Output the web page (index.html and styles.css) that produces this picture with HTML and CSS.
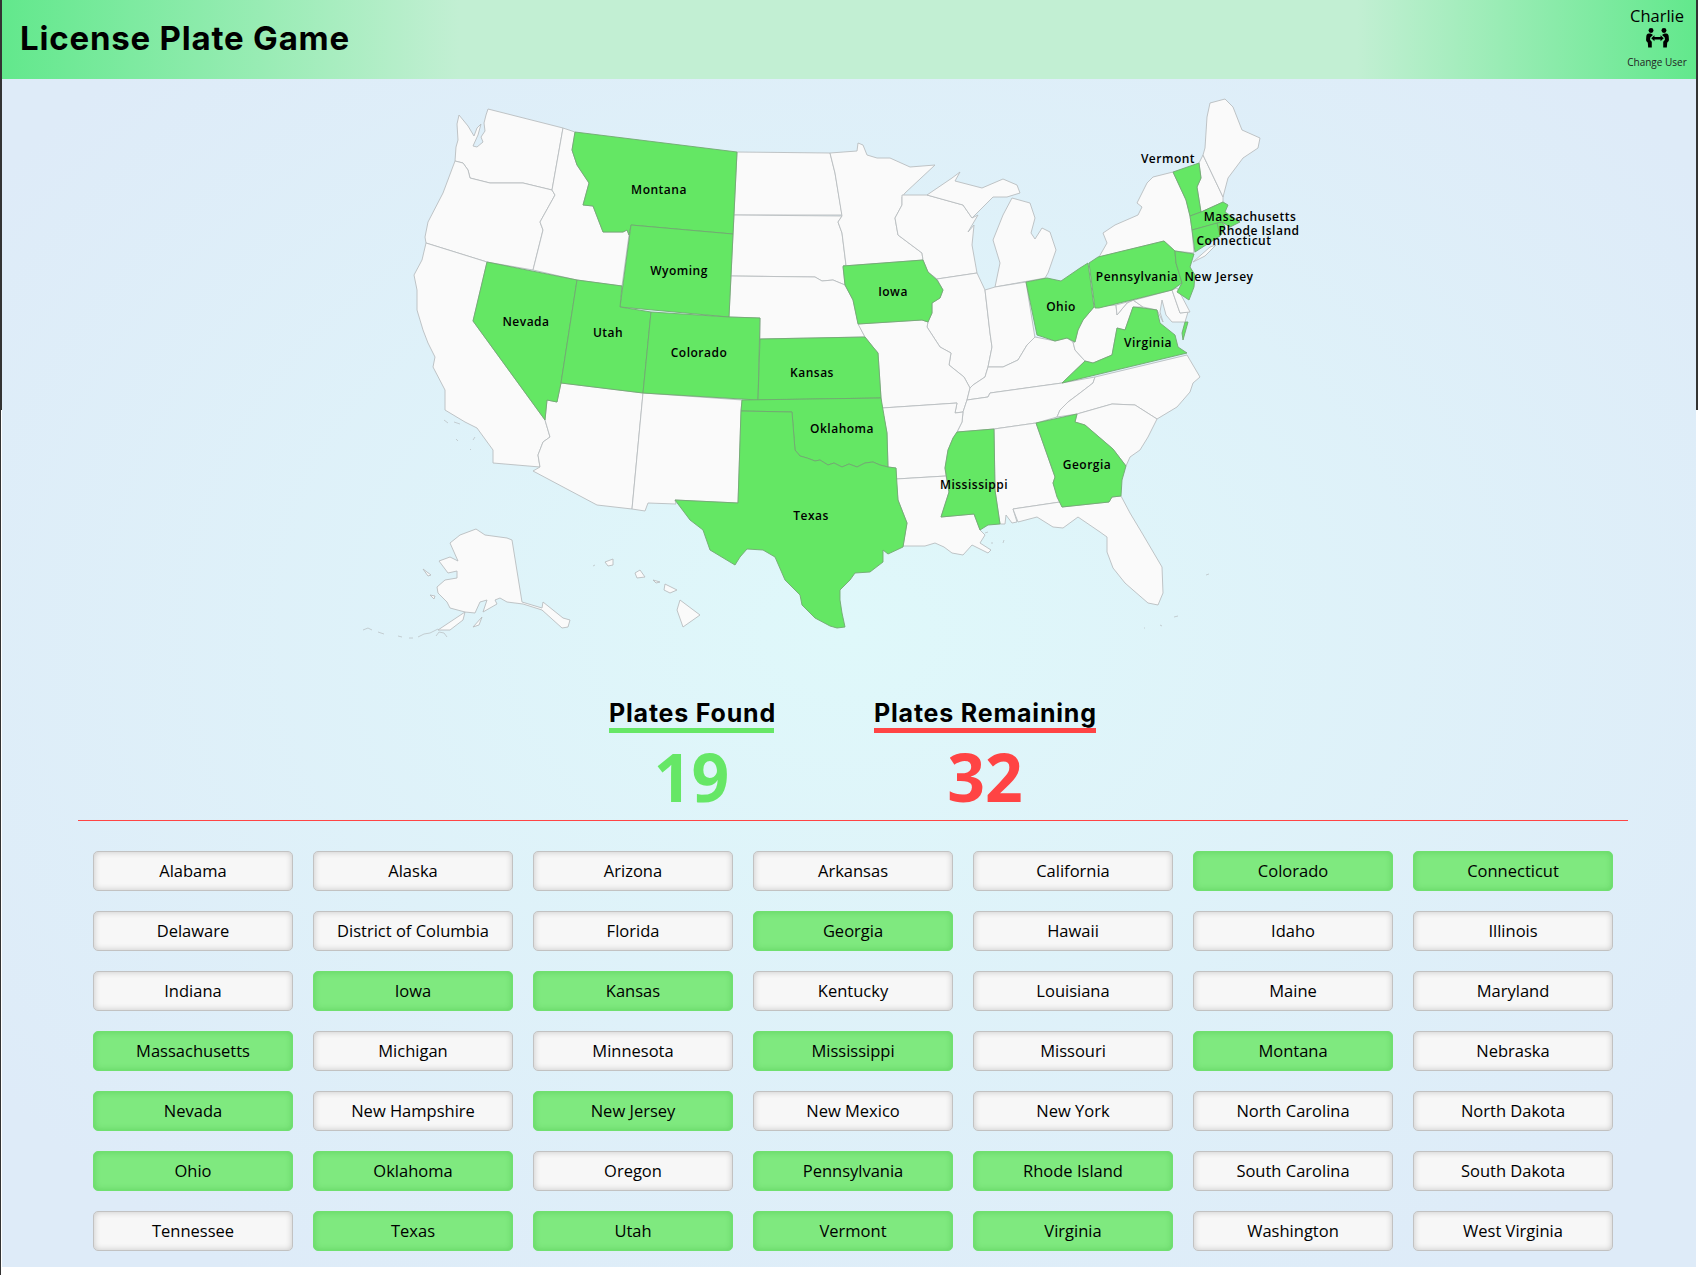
FILE: index.html
```html
<!DOCTYPE html>
<html lang="en">
  <head>
    <meta charset="UTF-8" />
    <meta name="viewport" content="width=device-width, initial-scale=1.0" />
    <title>License Plate Game</title>
    <link rel="stylesheet" href="styles.css">
  </head>
  <body>
    <div class="page">
      <header>
        <h1>License Plate Game</h1>
        <div class="user">
          <span class="user-name">Charlie</span>
          <svg class="user-icon" viewBox="0 0 24 21" aria-hidden="true">
            <circle cx="5.2" cy="2.6" r="2.6" />
            <circle cx="18.8" cy="2.6" r="2.6" />
            <path d="M2.8 5.8 C1 6 0.3 7.4 0.2 9.2 L0 12.4 C0 13.8 1 14.6 1.8 15.4 L2.2 20.6 L6 20.6 L6 14.4 L4.2 12.4 L4.4 10 L7.2 7.4 C6.4 6.4 4.8 5.6 2.8 5.8 Z" />
            <path d="M21.2 5.8 C23 6 23.7 7.4 23.8 9.2 L24 12.4 C24 13.8 23 14.6 22.2 15.4 L21.8 20.6 L18 20.6 L18 14.4 L19.8 12.4 L19.6 10 L16.8 7.4 C17.6 6.4 19.2 5.6 21.2 5.8 Z" />
            <path d="M5.4 10.8 L8.8 7.6 L8.8 9.5 L15.2 9.5 L15.2 7.6 L18.6 10.8 L15.2 14 L15.2 12.1 L8.8 12.1 L8.8 14 Z" />
          </svg>
          <span class="user-change">Change User</span>
        </div>
      </header>

      <svg class="map" viewBox="349 90 1000 570" role="img" aria-label="Map of the United States">
        <g class="islands">
          <path d="M363 630 l5 -2 l4 2 M378 632 l6 2 M398 636 l4 1 M409 638 l4 0 M418 637 l6 -3 l6 -1 l8 -4 M436 636 l3 -4 l5 1 l3 4" />
          <path d="M444 420 l4 3 M454 422 l6 2 M456 439 l2 2 M473 440 l2 -3 M470 449 l1 1" />
          <path d="M1206 575 l3 -1 M1144 628 l1 0 M1160 625 l2 1 M1174 617 l4 -1" />
          <path d="M593 566 l2 -1 M985 533 l3 -1 M992 542 l0 2 M1004 540 l-1 3" />
          <path d="M545 610 l3 5 M550 615 l5 6 M557 620 l5 6" />
        </g>
        <g class="states">
          <path d="M459 115 L457 124 458 140 456 147 455 161 463 163 468 170 470 178 490 183 523 183 552 190 563 128 488 109 486 115 484 123 485 131 481 137 483 142 477 147 473 146 478 135 481 124 477 128 474 136 468 126 Z" />
          <path d="M455 161 L443 193 428 222 425 237 426 243 487 262 533 270 543 230 540 222 555 195 552 190 523 183 490 183 470 178 468 170 463 163 Z" />
          <path d="M426 243 L422 260 414 275 417 290 417 310 423 330 428 343 435 357 433 367 445 390 445 410 465 422 477 428 493 450 493 463 540 467 538 455 543 442 550 437 545 420 473 321 487 262 Z" />
          <path d="M563 128 L575 132 572 150 577 165 589 183 583 205 593 206 603 232 623 232 627 230 629 235 622 286 577 280 533 270 543 230 540 222 555 195 552 190 Z" />
          <path d="M561 383 L643 393 632 509 597 505 533 471 540 467 538 455 543 442 550 437 545 420 547 400 557 402 Z" />
          <path d="M643 393 L742 400 741 411 738 503 675 500 676 504 648 503 645 511 632 509 Z" />
          <path d="M737 152 L830 153 835 173 842 215 734 215 Z" />
          <path d="M734 215 L842 216 838 222 842 233 846 265 843 267 845 285 833 280 822 281 815 277 731 276 Z" />
          <path d="M731 276 L815 277 822 281 833 280 845 285 853 300 858 323 865 337 760 339 760 318 729 317 Z" />
          <path d="M830 153 L857 151 858 143 863 145 867 155 877 158 890 158 910 167 935 165 905 193 902 197 902 205 895 218 898 235 922 253 923 260 843 266 846 265 842 233 838 222 842 216 835 173 Z" />
          <path d="M902 195 L927 195 963 205 972 218 978 215 968 232 974 225 972 245 977 273 937 279 928 272 923 260 922 253 898 235 895 218 902 205 Z" />
          <path d="M927 195 L952 178 960 172 955 181 982 188 1003 179 1017 185 1020 193 1007 197 993 197 977 213 972 218 963 205 Z" />
          <path d="M1012 198 L1030 203 1035 218 1031 233 1035 239 1042 228 1050 232 1056 250 1048 273 1045 278 995 287 1000 263 993 240 1003 215 Z" />
          <path d="M937 279 L977 273 985 290 990 333 992 347 988 367 985 377 973 385 970 388 964 377 949 365 951 353 940 347 927 327 928 322 932 313 932 303 940 298 943 290 Z" />
          <path d="M985 290 L995 287 1026 282 1035 338 1027 345 1018 360 1003 367 988 367 992 347 990 333 Z" />
          <path d="M858 324 L922 320 928 322 927 327 940 347 951 353 949 365 964 377 970 388 967 400 963 412 955 413 957 403 882 408 881 398 878 353 873 347 865 337 Z" />
          <path d="M1035 337 L1055 341 1067 338 1073 342 1075 350 1085 361 1062 383 990 393 988 397 967 400 970 388 973 385 985 377 988 367 1003 367 1018 360 1027 345 Z" />
          <path d="M1062 383 L1095 377 1093 383 1080 393 1068 402 1060 410 1057 417 1036 423 994 429 957 432 962 422 963 412 967 400 988 397 990 393 Z" />
          <path d="M1095 377 L1187 355 1200 377 1193 383 1190 392 1177 407 1157 419 1135 405 1112 404 1077 414 1057 417 1060 410 1068 402 1080 393 1093 383 Z" />
          <path d="M882 408 L957 403 955 413 963 412 962 422 957 432 953 438 948 450 945 468 946 476 896 479 896 468 888 467 887 433 Z" />
          <path d="M896 479 L946 476 949 492 941 517 974 514 980 530 985 535 980 543 991 550 988 553 972 545 963 555 952 553 944 547 935 543 925 546 903 546 907 523 898 500 Z" />
          <path d="M994 429 L1036 423 1055 477 1053 483 1060 502 1013 509 1017 522 1012 523 1006 515 1005 524 1000 524 995 490 Z" />
          <path d="M1013 509 L1060 502 1062 507 1109 502 1112 497 1121 496 1130 513 1142 533 1162 567 1163 593 1158 605 1148 603 1133 590 1125 583 1113 568 1107 552 1107 537 1100 532 1078 517 1063 528 1053 527 1037 517 1018 522 Z" />
          <path d="M1077 414 L1112 404 1135 405 1157 419 1148 437 1140 450 1130 457 1126 466 1113 449 1085 425 1075 422 Z" />
          <path d="M1094 307 L1116 305 1117 315 1127 303 1133 300 1143 307 1133 307 1125 330 1117 328 1112 355 1093 363 1085 361 1075 350 1073 342 1075 342 1078 330 1083 320 Z" />
          <path d="M1116 305 L1172 290 1180 313 1188 312 1185 322 1172 322 1166 315 1162 300 1160 312 1163 322 1157 310 1143 307 1133 300 1127 303 1117 315 Z" />
          <path d="M1172 290 L1177 288 1180 293 1190 312 1180 313 Z" />
          <path d="M1099 257 L1107 243 1103 233 1115 225 1138 215 1142 207 1137 203 1147 183 1153 177 1173 172 1186 200 1190 216 1192 230 1194 253 1175 251 1164 241 Z" />
          <path d="M1193 262 L1210 247 1216 245 1205 256 Z" />
          <path d="M1203 155 L1223 197 1223 202 1201 212 1197 187 1201 178 1199 163 Z" />
          <path d="M1203 155 L1205 148 1207 117 1210 103 1225 99 1233 107 1242 130 1260 138 1258 148 1243 158 1228 178 1223 197 Z" />
          <path d="M476 529 L485 535 507 538 512 540 522 602 542 608 543 602 563 618 570 620 568 627 562 628 542 610 523 604 507 602 500 598 495 600 497 604 483 612 487 600 480 602 475 613 465 612 463 620 450 630 438 630 465 612 450 608 447 602 438 593 437 587 445 580 457 578 457 571 448 573 439 561 450 557 458 561 450 543 460 535 Z" />
          <path d="M473 627 L482 617 479 625 Z" />
          <path d="M423 569 L431 575 428 576 Z" />
          <path d="M430 595 L435 596 434 599 Z" />
          <path d="M680 600 L700 615 683 627 677 610 Z" />
          <path d="M665 584 L677 590 670 593 664 590 Z" />
          <path d="M635 573 L640 570 645 577 637 578 Z" />
          <path d="M605 562 L613 559 613 565 608 566 Z" />
          <path d="M653 580 L660 582 656 583 Z" />
        </g>
        <g class="states found">
          <path d="M575 132 L737 152 733 234 631 225 629 235 627 230 623 232 603 232 593 206 583 205 589 183 577 165 572 150 Z" />
          <path d="M631 225 L733 234 729 317 620 307 Z" />
          <path d="M487 262 L577 280 561 383 557 402 547 400 545 420 473 321 Z" />
          <path d="M577 280 L622 286 620 307 651 312 643 393 561 383 Z" />
          <path d="M651 312 L729 317 760 318 758 400 643 393 Z" />
          <path d="M760 339 L865 337 873 347 878 353 881 398 758 400 Z" />
          <path d="M742 400 L881 398 887 433 888 467 880 465 873 462 865 463 857 467 849 464 842 467 834 463 828 465 820 460 815 461 807 458 800 456 795 450 792 412 741 411 Z" />
          <path d="M741 411 L792 412 795 450 800 456 807 458 815 461 820 460 828 465 834 463 842 467 849 464 857 467 865 463 873 462 880 465 888 467 896 468 898 500 907 523 903 547 888 554 883 550 883 562 870 572 855 573 850 580 840 590 840 600 842 613 845 627 837 628 830 626 815 618 802 605 800 595 785 580 775 557 763 550 747 549 740 557 735 565 710 550 703 530 690 520 675 500 738 503 Z" />
          <path d="M843 266 L923 260 928 272 937 280 943 290 940 298 932 303 932 313 928 322 922 320 858 324 853 300 845 285 Z" />
          <path d="M1026 282 L1047 278 1061 281 1080 268 1088 263 1094 307 1083 320 1078 330 1075 342 1067 338 1055 341 1037 335 Z" />
          <path d="M957 432 L994 429 995 490 1000 524 988 525 980 530 974 514 941 517 949 492 945 468 948 450 953 438 Z" />
          <path d="M1036 423 L1077 414 1075 422 1085 425 1113 449 1126 466 1122 480 1121 496 1112 497 1109 502 1062 507 1057 497 1053 483 1055 477 Z" />
          <path d="M1089 263 L1098 257 1164 241 1175 251 1176 263 1182 283 1172 290 1099 308 1095 308 Z" />
          <path d="M1175 251 L1194 254 1190 267 1195 275 1194 287 1189 300 1177 292 1182 283 1176 263 Z" />
          <path d="M1062 383 L1085 361 1093 363 1112 355 1117 328 1125 330 1133 307 1143 308 1157 310 1160 323 1175 335 1178 347 1187 353 Z" />
          <path d="M1185 322 L1188 322 1183 340 1182 333 Z" />
          <path d="M1173 172 L1199 163 1201 178 1197 187 1201 212 1190 216 1186 200 Z" />
          <path d="M1190 216 L1201 212 1223 202 1228 205 1225 212 1240 222 1230 227 1222 222 1192 230 Z" />
          <path d="M1217 223 L1222 222 1225 226 1221 235 1219 236 Z" />
          <path d="M1192 230 L1217 223 1220 236 1195 252 Z" />
        </g>
        <g class="labels">
          <text x="659" y="194">Montana</text>
          <text x="679" y="275">Wyoming</text>
          <text x="526" y="326">Nevada</text>
          <text x="608" y="337">Utah</text>
          <text x="699" y="357">Colorado</text>
          <text x="812" y="377">Kansas</text>
          <text x="842" y="433">Oklahoma</text>
          <text x="811" y="520">Texas</text>
          <text x="974" y="489">Mississippi</text>
          <text x="1087" y="469">Georgia</text>
          <text x="893" y="296">Iowa</text>
          <text x="1061" y="311">Ohio</text>
          <text x="1137" y="281">Pennsylvania</text>
          <text x="1219" y="281">New Jersey</text>
          <text x="1148" y="347">Virginia</text>
          <text x="1168" y="163">Vermont</text>
          <text x="1250" y="221">Massachusetts</text>
          <text x="1259" y="235">Rhode Island</text>
          <text x="1234" y="245">Connecticut</text>
        </g>
      </svg>

      <section class="stats">
        <div class="stat stat-found">
          <h2>Plates Found</h2>
          <p>19</p>
        </div>
        <div class="stat stat-remaining">
          <h2>Plates Remaining</h2>
          <p>32</p>
        </div>
      </section>

      <main class="plates">
        <div class="plate">Alabama</div>
        <div class="plate">Alaska</div>
        <div class="plate">Arizona</div>
        <div class="plate">Arkansas</div>
        <div class="plate">California</div>
        <div class="plate found">Colorado</div>
        <div class="plate found">Connecticut</div>
        <div class="plate">Delaware</div>
        <div class="plate">District of Columbia</div>
        <div class="plate">Florida</div>
        <div class="plate found">Georgia</div>
        <div class="plate">Hawaii</div>
        <div class="plate">Idaho</div>
        <div class="plate">Illinois</div>
        <div class="plate">Indiana</div>
        <div class="plate found">Iowa</div>
        <div class="plate found">Kansas</div>
        <div class="plate">Kentucky</div>
        <div class="plate">Louisiana</div>
        <div class="plate">Maine</div>
        <div class="plate">Maryland</div>
        <div class="plate found">Massachusetts</div>
        <div class="plate">Michigan</div>
        <div class="plate">Minnesota</div>
        <div class="plate found">Mississippi</div>
        <div class="plate">Missouri</div>
        <div class="plate found">Montana</div>
        <div class="plate">Nebraska</div>
        <div class="plate found">Nevada</div>
        <div class="plate">New Hampshire</div>
        <div class="plate found">New Jersey</div>
        <div class="plate">New Mexico</div>
        <div class="plate">New York</div>
        <div class="plate">North Carolina</div>
        <div class="plate">North Dakota</div>
        <div class="plate found">Ohio</div>
        <div class="plate found">Oklahoma</div>
        <div class="plate">Oregon</div>
        <div class="plate found">Pennsylvania</div>
        <div class="plate found">Rhode Island</div>
        <div class="plate">South Carolina</div>
        <div class="plate">South Dakota</div>
        <div class="plate">Tennessee</div>
        <div class="plate found">Texas</div>
        <div class="plate found">Utah</div>
        <div class="plate found">Vermont</div>
        <div class="plate found">Virginia</div>
        <div class="plate">Washington</div>
        <div class="plate">West Virginia</div>
      </main>
    </div>
  </body>
</html>
```

FILE: styles.css
```css
* {
  box-sizing: border-box;
  margin: 0;
  padding: 0;
}

html,
body {
  font-family: "Open Sans", sans-serif;
  color: #000000;
}

body {
  background:
    linear-gradient(#333333, #333333) left top / 2px 410px no-repeat,
    linear-gradient(#333333, #333333) right top / 2px 410px no-repeat,
    linear-gradient(#333333, #333333) left top / 1px 100% no-repeat,
    #ffffff;
  height: 1275px;
  overflow: hidden;
}

.page {
  margin: 0 2px;
  height: 1267px;
  background: radial-gradient(ellipse 62% 62% at 50% 50%, #dff8fa 0%, #deebf8 100%);
}

header {
  display: flex;
  align-items: center;
  justify-content: space-between;
  height: 79px;
  padding: 0 9px 0 18px;
  background: linear-gradient(90deg, #62e88c 0%, #c2efd3 27%, #c2efd3 80%, #62e88c 100%);
}

h1 {
  font-family: Inter, sans-serif;
  font-size: 33px;
  font-weight: 700;
  letter-spacing: 0.8px;
  margin-bottom: 3px;
}

.user {
  display: flex;
  flex-direction: column;
  align-items: center;
  align-self: flex-start;
  width: 60px;
  padding-top: 6px;
}

.user-name {
  font-size: 16.5px;
  line-height: 20px;
}

.user-icon {
  width: 23px;
  height: 20px;
  margin: 2px 0 7px;
  fill: #000000;
}

.user-change {
  font-size: 10px;
  line-height: 14px;
  white-space: nowrap;
  color: #222222;
}

.map {
  display: block;
  width: 1000px;
  height: 570px;
  margin: 11px auto 0;
}

.states path {
  fill: #fafafa;
  stroke: #b9bdc0;
  stroke-width: 0.9;
  stroke-linejoin: round;
}

.states.found path {
  fill: #64e764;
  stroke: #72a872;
}

.islands path {
  fill: none;
  stroke: #c0c8cc;
  stroke-width: 0.9;
}

.labels text {
  font-size: 12px;
  font-weight: 600;
  letter-spacing: 0.5px;
  text-anchor: middle;
}

.stats {
  display: flex;
  justify-content: center;
  gap: 100px;
  padding: 40px 0 0 7px;
}

.stat {
  text-align: center;
}

.stat h2 {
  font-family: Inter, sans-serif;
  font-size: 25px;
  font-weight: 700;
  letter-spacing: 0.8px;
  line-height: 27px;
  padding-bottom: 1px;
  border-bottom: 5px solid;
  white-space: nowrap;
}

.stat p {
  font-size: 66px;
  font-weight: 700;
  line-height: 76px;
  margin-top: 5px;
}

.stat-found {
  width: 165px;
}

.stat-remaining {
  width: 222px;
}

.stat-found h2 {
  border-color: #66e766;
}

.stat-found p {
  color: #66e766;
}

.stat-remaining h2 {
  border-color: #ff4444;
}

.stat-remaining p {
  color: #ff4444;
}

.plates {
  display: grid;
  grid-template-columns: repeat(7, 200px);
  grid-auto-rows: 40px;
  gap: 20px;
  width: 1550px;
  margin: 6px 0 0 76px;
  padding: 30px 15px 0;
  border-top: 1px solid #ff4444;
}

.plate {
  display: flex;
  align-items: center;
  justify-content: center;
  padding-bottom: 2px;
  font-size: 16.5px;
  font-weight: 500;
  background-color: #f7f7f7;
  border: 1px solid #c2c2c2;
  border-radius: 5px;
  box-shadow: inset 0 0 6px rgba(0, 0, 0, 0.2);
}

.plate.found {
  background-color: #7fe97f;
  border-color: #70e070;
  box-shadow: inset 0 0 6px rgba(40, 170, 40, 0.35);
}
```
